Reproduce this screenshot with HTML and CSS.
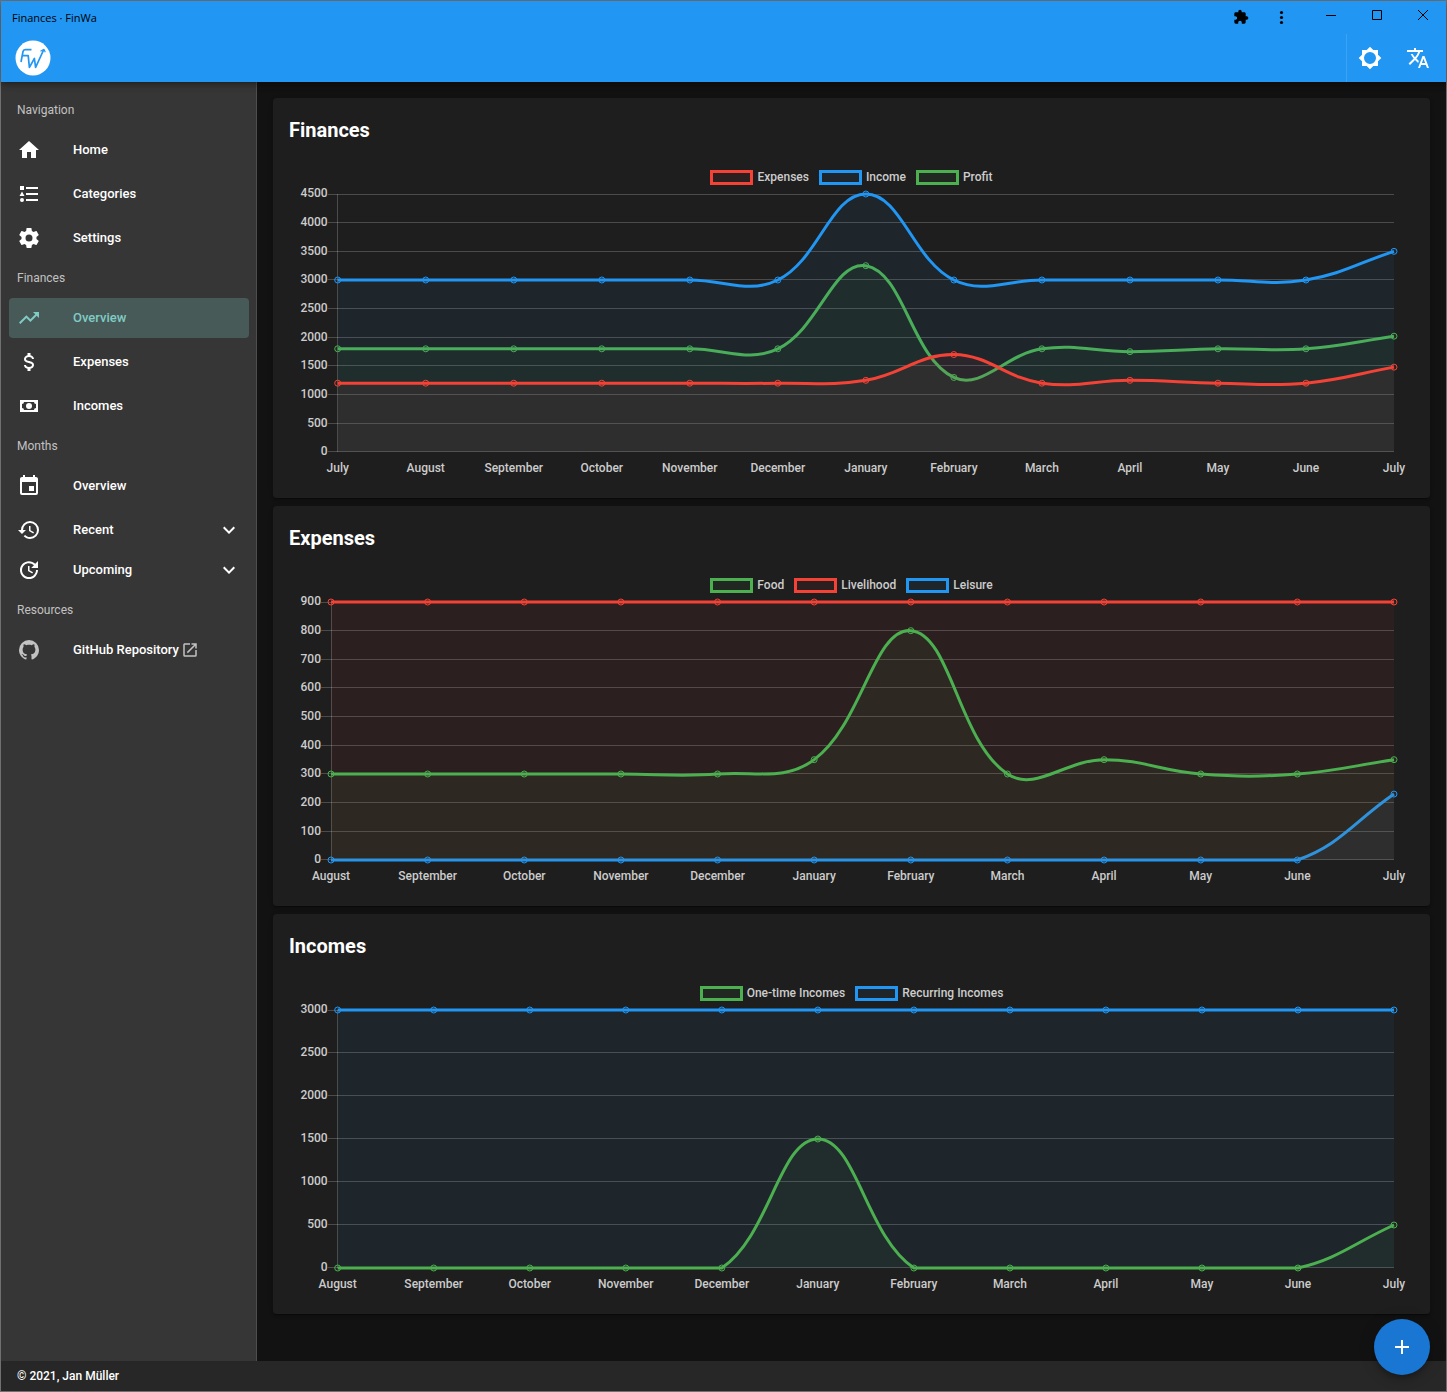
FILE: index.html
```html
<!DOCTYPE html>
<html lang="en">
<head>
<meta charset="utf-8">
<meta name="viewport" content="width=device-width, initial-scale=1">
<title>Finances · FinWa</title>
<link rel="stylesheet" href="styles.css">
<script src="charts.js" defer></script>
</head>
<body>
<div class="window">
  <header class="top">
    <div class="titlebar">
      <span class="titlebar-text">Finances · FinWa</span>
      <div class="titlebar-tools">
        <button class="tool" type="button" aria-label="Extensions"><svg width="16" height="16" viewBox="0 0 24 24"><path d="M20.5,11H19V7C19,5.89 18.1,5 17,5H13V3.5A2.5,2.5 0 0,0 10.5,1A2.5,2.5 0 0,0 8,3.5V5H4A2,2 0 0,0 2,7V10.8H3.5C5,10.8 6.2,12 6.2,13.5C6.2,15 5,16.2 3.5,16.2H2V20A2,2 0 0,0 4,22H7.8V20.5C7.8,19 9,17.8 10.5,17.8C12,17.8 13.2,19 13.2,20.5V22H17A2,2 0 0,0 19,20V16H20.5A2.5,2.5 0 0,0 23,13.5A2.5,2.5 0 0,0 20.5,11Z"/></svg></button>
        <button class="tool" type="button" aria-label="Menu"><svg width="16" height="16" viewBox="0 0 16 16"><circle cx="8.500" cy="3.500" r="1.6"/><circle cx="8.500" cy="8.500" r="1.6"/><circle cx="8.500" cy="13.500" r="1.6"/></svg></button>
      </div>
      <div class="window-controls">
        <button class="control" type="button" aria-label="Minimize"><svg width="12" height="12" viewBox="0 0 12 12"><path d="M1 6.5H11"/></svg></button>
        <button class="control" type="button" aria-label="Maximize"><svg width="12" height="12" viewBox="0 0 12 12"><path d="M1.5 1.5H10.5V10.5H1.5Z"/></svg></button>
        <button class="control" type="button" aria-label="Close"><svg width="12" height="12" viewBox="0 0 12 12"><path d="M1 1L11 11M11 1L1 11"/></svg></button>
      </div>
    </div>
    <div class="appbar">
      <a class="logo" href="#" aria-label="FinWa">
        <svg width="36" height="36" viewBox="0 0 36 36">
          <circle cx="18" cy="18" r="17.5" fill="#fff"/>
          <g fill="none" stroke="#2196f3" stroke-width="1.7" stroke-linejoin="round">
            <path d="M6 22L8 11.500Q8.400 9.600 10.400 9.600H16.500"/>
            <path d="M7 15.600H13.200L14.400 27.300L19.400 18.500L20.600 27.300L28.600 10"/>
            <path d="M25.500 11.200L29 9.400L30.300 12.200" stroke-width="1.200"/>
          </g>
        </svg>
      </a>
      <div class="appbar-actions">
        <button class="action" type="button" aria-label="Toggle brightness"><svg class="icon" viewBox="0 0 24 24"><path d="M12,18A6,6 0 0,1 6,12A6,6 0 0,1 12,6A6,6 0 0,1 18,12A6,6 0 0,1 12,18M20,15.31L23.31,12L20,8.69V4H15.31L12,0.69L8.69,4H4V8.69L0.69,12L4,15.31V20H8.69L12,23.31L15.31,20H20V15.31Z"/></svg></button>
        <button class="action" type="button" aria-label="Language"><svg class="icon" viewBox="0 0 24 24"><path d="M12.87,15.07L10.33,12.56L10.36,12.53C12.1,10.59 13.34,8.36 14.07,6H17V4H10V2H8V4H1V6H12.17C11.5,7.92 10.44,9.75 9,11.35C8.07,10.32 7.3,9.19 6.69,8H4.69C5.42,9.63 6.42,11.17 7.67,12.56L2.58,17.58L4,19L9,14L12.11,17.11L12.87,15.07M18.5,10H16.5L12,22H14L15.12,19H19.87L21,22H23L18.5,10M15.88,17L17.5,12.67L19.12,17H15.88Z"/></svg></button>
      </div>
    </div>
  </header>

  <div class="body">
    <nav class="sidebar" aria-label="Main">
      <h2 class="nav-heading">Navigation</h2>
      <div class="nav-group">
        <a class="nav-item" href="#"><svg class="icon" viewBox="0 0 24 24"><path d="M10,20V14H14V20H19V12H22L12,3L2,12H5V20H10Z"/></svg>Home</a>
        <a class="nav-item" href="#"><svg class="icon" viewBox="0 0 24 24"><path d="M5,9.5L7.5,14H2.5L5,9.5M3,4H7V8H3V4M5,20A2,2 0 0,0 7,18A2,2 0 0,0 5,16A2,2 0 0,0 3,18A2,2 0 0,0 5,20M9,5V7H21V5H9M9,19H21V17H9V19M9,13H21V11H9V13Z"/></svg>Categories</a>
        <a class="nav-item" href="#"><svg class="icon" viewBox="0 0 24 24"><path d="M12,15.5A3.5,3.5 0 0,1 8.5,12A3.5,3.5 0 0,1 12,8.5A3.5,3.5 0 0,1 15.5,12A3.5,3.5 0 0,1 12,15.5M19.43,12.97C19.47,12.65 19.5,12.33 19.5,12C19.5,11.67 19.47,11.34 19.43,11L21.54,9.37C21.73,9.22 21.78,8.95 21.66,8.73L19.66,5.27C19.54,5.05 19.27,4.96 19.05,5.05L16.56,6.05C16.04,5.66 15.5,5.32 14.87,5.07L14.5,2.42C14.46,2.18 14.25,2 14,2H10C9.75,2 9.54,2.18 9.5,2.42L9.13,5.07C8.5,5.32 7.96,5.66 7.44,6.05L4.95,5.05C4.73,4.96 4.46,5.05 4.34,5.27L2.34,8.73C2.21,8.95 2.27,9.22 2.46,9.37L4.57,11C4.53,11.34 4.5,11.67 4.5,12C4.5,12.33 4.53,12.65 4.57,12.97L2.46,14.63C2.27,14.78 2.21,15.05 2.34,15.27L4.34,18.73C4.46,18.95 4.73,19.03 4.95,18.95L7.44,17.94C7.96,18.34 8.5,18.68 9.13,18.93L9.5,21.58C9.54,21.82 9.75,22 10,22H14C14.25,22 14.46,21.82 14.5,21.58L14.87,18.93C15.5,18.67 16.04,18.34 16.56,17.94L19.05,18.95C19.27,19.03 19.54,18.95 19.66,18.73L21.66,15.27C21.78,15.05 21.73,14.78 21.54,14.63L19.43,12.97Z"/></svg>Settings</a>
      </div>
      <h2 class="nav-heading">Finances</h2>
      <div class="nav-group">
        <a class="nav-item is-active" href="#" aria-current="page"><svg class="icon" viewBox="0 0 24 24"><path d="M16,6L18.29,8.29L13.41,13.17L9.41,9.17L2,16.59L3.41,18L9.41,12L13.41,16L19.71,9.71L22,12V6H16Z"/></svg>Overview</a>
        <a class="nav-item" href="#"><svg class="icon" viewBox="0 0 24 24"><path d="M7,15H9C9,16.08 10.37,17 12,17C13.63,17 15,16.08 15,15C15,13.9 13.96,13.5 11.76,12.97C9.64,12.44 7,11.78 7,9C7,7.21 8.47,5.69 10.5,5.18V3H13.5V5.18C15.53,5.69 17,7.21 17,9H15C15,7.92 13.63,7 12,7C10.37,7 9,7.92 9,9C9,10.1 10.04,10.5 12.24,11.03C14.36,11.56 17,12.22 17,15C17,16.79 15.53,18.31 13.5,18.82V21H10.5V18.82C8.47,18.31 7,16.79 7,15Z"/></svg>Expenses</a>
        <a class="nav-item" href="#"><svg class="icon" viewBox="0 0 24 24"><path d="M3,6H21V18H3V6M12,9A3,3 0 0,1 15,12A3,3 0 0,1 12,15A3,3 0 0,1 9,12A3,3 0 0,1 12,9M7,8A2,2 0 0,1 5,10V14A2,2 0 0,1 7,16H17A2,2 0 0,1 19,14V10A2,2 0 0,1 17,8H7Z"/></svg>Incomes</a>
      </div>
      <h2 class="nav-heading">Months</h2>
      <div class="nav-group">
        <a class="nav-item" href="#"><svg class="icon" viewBox="0 0 24 24"><path d="M19,19H5V8H19M16,1V3H8V1H6V3H5C3.89,3 3,3.89 3,5V19A2,2 0 0,0 5,21H19A2,2 0 0,0 21,19V5C21,3.89 20.1,3 19,3H18V1M17,12H12V17H17V12Z"/></svg>Overview</a>
        <div class="nav-expanders">
          <button class="nav-item" type="button" aria-expanded="false"><svg class="icon" viewBox="0 0 24 24"><path d="M13.5,8H12V13L16.28,15.54L17,14.33L13.5,12.25V8M13,3A9,9 0 0,0 4,12H1L4.96,16.03L9,12H6A7,7 0 0,1 13,5A7,7 0 0,1 20,12A7,7 0 0,1 13,19C11.07,19 9.32,18.21 8.06,16.94L6.64,18.36C8.27,20 10.5,21 13,21A9,9 0 0,0 22,12A9,9 0 0,0 13,3"/></svg>Recent<svg class="icon chevron" viewBox="0 0 24 24"><path d="M7.41,8.58L12,13.17L16.59,8.58L18,10L12,16L6,10L7.41,8.58Z"/></svg></button>
          <button class="nav-item" type="button" aria-expanded="false"><svg class="icon" viewBox="0 0 24 24"><path d="M21,10.12H14.22L16.96,7.3C14.23,4.6 9.81,4.5 7.08,7.2C4.35,9.91 4.35,14.28 7.08,17C9.81,19.7 14.23,19.7 16.96,17C18.32,15.65 19,14.08 19,12.1H21C21,14.08 20.12,16.65 18.36,18.39C14.85,21.87 9.15,21.87 5.64,18.39C2.14,14.92 2.11,9.28 5.62,5.81C9.13,2.34 14.76,2.34 18.27,5.81L21,3V10.12M12.5,8V12.25L16,14.33L15.28,15.54L11,13V8H12.5Z"/></svg>Upcoming<svg class="icon chevron" viewBox="0 0 24 24"><path d="M7.41,8.58L12,13.17L16.59,8.58L18,10L12,16L6,10L7.41,8.58Z"/></svg></button>
        </div>
      </div>
      <h2 class="nav-heading">Resources</h2>
      <div class="nav-group">
        <a class="nav-item" href="#"><svg class="icon muted" viewBox="0 0 24 24"><path d="M12,2A10,10 0 0,0 2,12C2,16.42 4.87,20.17 8.84,21.5C9.34,21.58 9.5,21.27 9.5,21C9.5,20.77 9.5,20.14 9.5,19.31C6.73,19.91 6.14,17.97 6.14,17.97C5.68,16.81 5.03,16.5 5.03,16.5C4.12,15.88 5.1,15.9 5.1,15.9C6.1,15.97 6.63,16.93 6.63,16.93C7.5,18.45 8.97,18 9.54,17.76C9.63,17.11 9.89,16.67 10.17,16.42C7.95,16.17 5.62,15.31 5.62,11.5C5.62,10.39 6,9.5 6.65,8.79C6.55,8.54 6.2,7.5 6.75,6.15C6.75,6.15 7.59,5.88 9.5,7.17C10.29,6.95 11.15,6.84 12,6.84C12.85,6.84 13.71,6.95 14.5,7.17C16.41,5.88 17.25,6.15 17.25,6.15C17.8,7.5 17.45,8.54 17.35,8.79C18,9.5 18.38,10.39 18.38,11.5C18.38,15.32 16.04,16.16 13.81,16.41C14.17,16.72 14.5,17.33 14.5,18.26C14.5,19.6 14.5,20.68 14.5,21C14.5,21.27 14.66,21.59 15.17,21.5C19.14,20.16 22,16.42 22,12A10,10 0 0,0 12,2Z"/></svg>GitHub Repository<svg class="external muted" viewBox="0 0 24 24"><path d="M14,3V5H17.59L7.76,14.83L9.17,16.24L19,6.41V10H21V3M19,19H5V5H12V3H5C3.89,3 3,3.9 3,5V19A2,2 0 0,0 5,21H19A2,2 0 0,0 21,19V12H19V19Z"/></svg></a>
      </div>
    </nav>

    <main class="content">
      <section class="card">
        <h1 class="card-title">Finances</h1>
        <ul class="legend">
          <li class="legend-item"><span class="swatch red"></span>Expenses</li>
          <li class="legend-item"><span class="swatch blue"></span>Income</li>
          <li class="legend-item"><span class="swatch green"></span>Profit</li>
        </ul>
        <svg class="chart" data-chart="finances" role="img" aria-label="Finances"></svg>
      </section>
      <section class="card">
        <h1 class="card-title">Expenses</h1>
        <ul class="legend">
          <li class="legend-item"><span class="swatch green"></span>Food</li>
          <li class="legend-item"><span class="swatch red"></span>Livelihood</li>
          <li class="legend-item"><span class="swatch blue"></span>Leisure</li>
        </ul>
        <svg class="chart" data-chart="expenses" role="img" aria-label="Expenses"></svg>
      </section>
      <section class="card">
        <h1 class="card-title">Incomes</h1>
        <ul class="legend">
          <li class="legend-item"><span class="swatch green"></span>One-time Incomes</li>
          <li class="legend-item"><span class="swatch blue"></span>Recurring Incomes</li>
        </ul>
        <svg class="chart" data-chart="incomes" role="img" aria-label="Incomes"></svg>
      </section>
    </main>
  </div>

  <footer class="footer">© 2021, Jan Müller</footer>
  <button class="fab" type="button" aria-label="Add"><svg class="icon" viewBox="0 0 24 24"><path d="M19,13H13V19H11V13H5V11H11V5H13V11H19V13Z"/></svg></button>
</div>
</body>
</html>
```
FILE: styles.css
```css
:root {
  --red: #f44336;
  --blue: #2196f3;
  --green: #4caf50;
  --red-fill: #f4433610;
  --blue-fill: #2196f310;
  --green-fill: #4caf5010;
}

* {
  box-sizing: border-box;
}

body {
  margin: 0;
  background: #121212;
  color: #fff;
  font-family: Roboto, "Liberation Sans", sans-serif;
}

button {
  padding: 0;
  border: 0;
  background: none;
  color: inherit;
  font: inherit;
  cursor: pointer;
}

a {
  color: inherit;
  text-decoration: none;
}

.window {
  display: flex;
  flex-direction: column;
  min-height: 100vh;
  border: 1px solid #707070;
}

.icon {
  flex: none;
  width: 24px;
  height: 24px;
  fill: currentColor;
}

.muted {
  color: #c2c2c2;
}

/* Title bar and app bar */
.top {
  position: relative;
  z-index: 1;
  background: var(--blue);
  box-shadow: 0 2px 4px -1px rgba(0, 0, 0, 0.2), 0 4px 5px rgba(0, 0, 0, 0.14), 0 1px 10px rgba(0, 0, 0, 0.12);
}

.titlebar {
  display: flex;
  align-items: center;
  height: 33px;
  color: #000;
  font: 11px/16px "Open Sans", "Noto Sans", sans-serif;
}

.titlebar-text {
  flex: 1;
  padding-left: 11px;
}

.titlebar-tools {
  display: flex;
  align-self: flex-start;
  margin-right: 7px;
}

.tool {
  display: grid;
  place-items: center;
  width: 40px;
  height: 32px;
}

.window-controls {
  display: flex;
  align-self: flex-start;
}

.control {
  display: grid;
  place-items: center;
  width: 46px;
  height: 28px;
}

.control svg {
  fill: none;
  stroke: #000;
}

.appbar {
  display: flex;
  justify-content: space-between;
  align-items: center;
  height: 48px;
  padding: 0 4px 0 14px;
}

.logo svg {
  display: block;
}

.appbar-actions {
  display: flex;
  box-shadow: inset 1px 0 rgba(255, 255, 255, 0.12);
}

.action {
  display: grid;
  place-items: center;
  width: 48px;
  height: 48px;
}

/* Sidebar */
.body {
  display: flex;
  flex: 1;
}

.sidebar {
  flex: none;
  width: 256px;
  padding: 8px 7px 8px 8px;
  border-right: 1px solid rgba(255, 255, 255, 0.12);
  background: #363636;
}

.nav-heading {
  margin: 0;
  padding-left: 8px;
  color: #c2c2c2;
  font-size: 12px;
  font-weight: 400;
  line-height: 40px;
}

.nav-group {
  display: flex;
  flex-direction: column;
  gap: 4px;
}

.nav-expanders {
  display: flex;
  flex-direction: column;
}

.nav-item {
  display: flex;
  align-items: center;
  height: 40px;
  padding: 0 8px;
  border-radius: 4px;
  font-size: 13px;
  font-weight: 500;
  line-height: 16px;
}

.nav-item .icon:first-child {
  margin-right: 32px;
}

.nav-item .chevron {
  margin-left: auto;
}

.nav-item.is-active {
  background: #485a58;
  color: #80cbc4;
}

.external {
  width: 18px;
  height: 18px;
  margin-left: 2px;
  fill: currentColor;
}

/* Cards */
.content {
  display: flex;
  flex: 1;
  flex-direction: column;
  gap: 8px;
  min-width: 0;
  padding: 16px;
}

.card {
  padding: 0 16px 16px;
  border-radius: 4px;
  background: #1e1e1e;
  box-shadow: 0 3px 1px -2px rgba(0, 0, 0, 0.2), 0 2px 2px rgba(0, 0, 0, 0.14), 0 1px 5px rgba(0, 0, 0, 0.12);
}

.card-title {
  margin: 0;
  font-size: 20px;
  font-weight: 700;
  line-height: 64px;
}

.legend {
  display: flex;
  justify-content: center;
  gap: 10px;
  margin: 0;
  padding: 8px 0 0;
  color: #ccc;
  font-size: 12px;
  font-weight: 500;
  line-height: 14px;
  list-style: none;
}

.legend-item {
  display: flex;
  gap: 4px;
  height: 16px;
}

.swatch {
  width: 43px;
  height: 15px;
  border: 3px solid;
}

.swatch.red {
  border-color: var(--red);
  background: var(--red-fill);
}

.swatch.blue {
  border-color: var(--blue);
  background: var(--blue-fill);
}

.swatch.green {
  border-color: var(--green);
  background: var(--green-fill);
}

/* Charts */
.chart {
  display: block;
  width: 100%;
  height: 296px;
  overflow: visible;
}

.chart .grid {
  stroke: rgba(255, 255, 255, 0.2);
}

.chart text {
  fill: #ccc;
  font-size: 12px;
  font-weight: 500;
}

.chart .x-label {
  text-anchor: middle;
}

.chart .y-label {
  text-anchor: end;
}

.chart .area {
  stroke: none;
}

.chart .line {
  fill: none;
  stroke-width: 3;
}

.chart .point {
  stroke-width: 1;
}

.series.red .area,
.series.red .point {
  fill: var(--red-fill);
}

.series.blue .area,
.series.blue .point {
  fill: var(--blue-fill);
}

.series.green .area,
.series.green .point {
  fill: var(--green-fill);
}

.series.red {
  stroke: var(--red);
}

.series.blue {
  stroke: var(--blue);
}

.series.green {
  stroke: var(--green);
}

/* Footer and floating button */
.footer {
  padding: 0 16px;
  background: #272727;
  font-size: 12px;
  font-weight: 500;
  line-height: 30px;
}

.fab {
  position: fixed;
  right: 17px;
  bottom: 17px;
  z-index: 2;
  display: grid;
  place-items: center;
  width: 56px;
  height: 56px;
  border-radius: 50%;
  background: #1976d2;
  box-shadow: 0 3px 5px -1px rgba(0, 0, 0, 0.2), 0 6px 10px rgba(0, 0, 0, 0.14), 0 1px 18px rgba(0, 0, 0, 0.12);
}
```
FILE: charts.js
```js
const MONTHS = ['August', 'September', 'October', 'November', 'December', 'January',
  'February', 'March', 'April', 'May', 'June', 'July'];

const CHARTS = {
  finances: {
    labels: ['July', ...MONTHS],
    max: 4500,
    step: 500,
    left: 48.7,
    series: [
      { color: 'red', values: [1200, 1200, 1200, 1200, 1200, 1200, 1250, 1700, 1200, 1250, 1200, 1200, 1480] },
      { color: 'blue', values: [3000, 3000, 3000, 3000, 3000, 3000, 4500, 3000, 3000, 3000, 3000, 3000, 3500] },
      { color: 'green', values: [1800, 1800, 1800, 1800, 1800, 1800, 3250, 1300, 1800, 1750, 1800, 1800, 2020] }
    ]
  },
  expenses: {
    labels: MONTHS,
    max: 900,
    step: 100,
    left: 42,
    series: [
      { color: 'green', values: [300, 300, 300, 300, 300, 350, 800, 300, 350, 300, 300, 350] },
      { color: 'red', values: [900, 900, 900, 900, 900, 900, 900, 900, 900, 900, 900, 900] },
      { color: 'blue', values: [0, 0, 0, 0, 0, 0, 0, 0, 0, 0, 0, 230] }
    ]
  },
  incomes: {
    labels: MONTHS,
    max: 3000,
    step: 500,
    left: 48.7,
    series: [
      { color: 'green', values: [0, 0, 0, 0, 0, 1500, 0, 0, 0, 0, 0, 500] },
      { color: 'blue', values: [3000, 3000, 3000, 3000, 3000, 3000, 3000, 3000, 3000, 3000, 3000, 3000] }
    ]
  }
};

const TOP = 8;
const BOTTOM = 266;
const RIGHT = 20;
const TENSION = 0.4;

const clamp = (y) => Math.min(BOTTOM, Math.max(TOP, y));

function el(parent, name, attrs, text) {
  const node = document.createElementNS('http://www.w3.org/2000/svg', name);
  for (const key in attrs) node.setAttribute(key, attrs[key]);
  if (text !== undefined) node.textContent = text;
  parent.appendChild(node);
  return node;
}

// Control points on both sides of a point, weighted by the distance to its neighbours.
function controls(prev, cur, next) {
  const before = Math.hypot(cur.x - prev.x, cur.y - prev.y);
  const after = Math.hypot(next.x - cur.x, next.y - cur.y);
  const a = TENSION * before / (before + after);
  const b = TENSION * after / (before + after);
  const dx = next.x - prev.x;
  const dy = next.y - prev.y;
  return {
    inX: cur.x - a * dx, inY: clamp(cur.y - a * dy),
    outX: cur.x + b * dx, outY: clamp(cur.y + b * dy)
  };
}

function curve(points) {
  const c = points.map((p, i) => controls(points[i - 1] || p, p, points[i + 1] || p));
  return points.map((p, i) => i === 0
    ? `M${p.x} ${p.y}`
    : `C${c[i - 1].outX} ${c[i - 1].outY} ${c[i].inX} ${c[i].inY} ${p.x} ${p.y}`).join('');
}

function draw(svg) {
  const chart = CHARTS[svg.dataset.chart];
  const right = svg.clientWidth - RIGHT;
  const left = chart.left;
  const xAt = (i) => left + (right - left) * i / (chart.labels.length - 1);
  const yAt = (v) => BOTTOM - (BOTTOM - TOP) * v / chart.max;
  svg.replaceChildren();

  // Grid lines sit on whole pixel rows and stay inside the plot area.
  for (let v = 0; v <= chart.max; v += chart.step) {
    const row = Math.ceil(yAt(v) - 0.01) - 1;
    const y = Math.max(TOP, row) + 0.5;
    el(svg, 'line', { class: 'grid', x1: left - 10, x2: right, y1: y, y2: y });
    el(svg, 'text', { class: 'y-label', x: left - 10, y: row + 4 }, v);
  }
  const axis = Math.floor(left) + 0.5;
  el(svg, 'line', { class: 'grid', x1: axis, x2: axis, y1: TOP, y2: BOTTOM });
  chart.labels.forEach((label, i) => {
    el(svg, 'text', { class: 'x-label', x: xAt(i), y: 286 }, label);
  });

  // The first series ends up on top.
  [...chart.series].reverse().forEach((series) => {
    const group = el(svg, 'g', { class: `series ${series.color}` });
    const points = series.values.map((v, i) => ({ x: xAt(i), y: yAt(v) }));
    const path = curve(points);
    el(group, 'path', { class: 'area', d: `${path}L${right} ${BOTTOM}L${left} ${BOTTOM}Z` });
    el(group, 'path', { class: 'line', d: path });
    points.forEach((p) => el(group, 'circle', { class: 'point', cx: p.x, cy: p.y, r: 3 }));
  });
}

const observer = new ResizeObserver((entries) => entries.forEach((entry) => draw(entry.target)));
document.querySelectorAll('.chart').forEach((svg) => {
  draw(svg);
  observer.observe(svg);
});
```
